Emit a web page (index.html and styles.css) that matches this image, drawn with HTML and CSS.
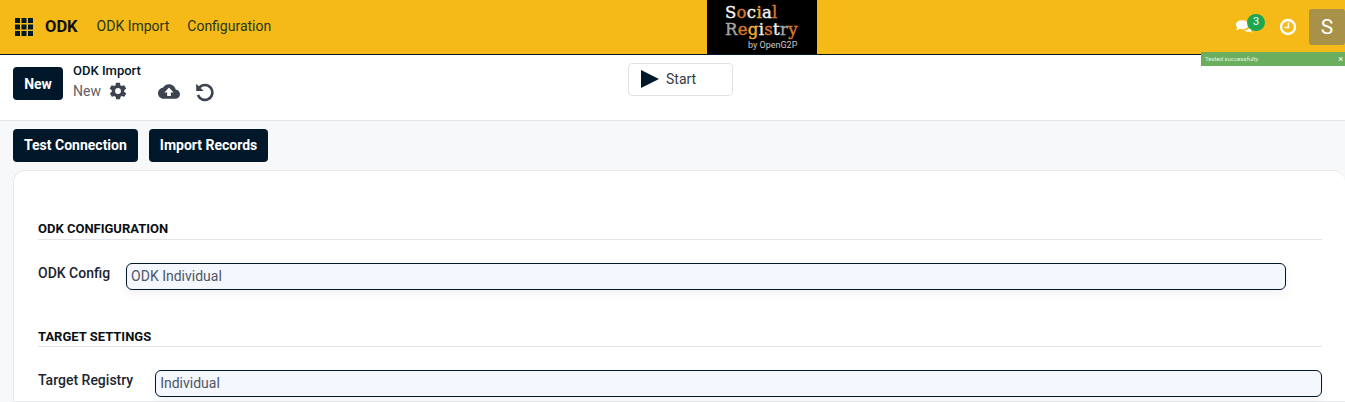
FILE: index.html
```html
<!DOCTYPE html>
<html lang="en">
<head>
<meta charset="utf-8">
<title>ODK Import</title>
<link rel="stylesheet" href="styles.css">
</head>
<body>
<header class="navbar">
  <div class="nav-left">
    <svg class="apps" viewBox="0 0 18 18" width="18" height="18"><path d="M0 0h5v5H0zM6.500 0h5v5h-5zM13 0h5v5h-5zM0 6.500h5v5H0zM6.500 6.500h5v5h-5zM13 6.500h5v5h-5zM0 13h5v5H0zM6.500 13h5v5h-5zM13 13h5v5h-5z"/></svg>
    <span class="brand">ODK</span>
    <a class="nav-link">ODK Import</a>
    <a class="nav-link">Configuration</a>
  </div>
  <div class="logo">
    <div class="logo-line"><span class="lw">S</span><span class="lo">o</span><span class="lw">c</span><span class="ly">i</span><span class="lw">a</span><span class="lo">l</span></div>
    <div class="logo-line"><span class="lg">R</span><span class="lo">e</span><span class="ly">g</span><span class="lw">i</span><span class="lo">s</span><span class="lw">t</span><span class="lg">r</span><span class="lo">y</span></div>
    <div class="logo-by">by OpenG2P</div>
  </div>
  <div class="nav-right">
    <span class="chat">
      <svg viewBox="0 0 20 16" width="18" height="15"><path d="M8 1c4 0 7 2 7 5s-3 5-7 5c-1 0-2 0-3-.4C4 11.500 2.500 12 1 12c1-.8 1.600-1.800 1.700-2.800C1.600 8.300 1 7.200 1 6c0-3 3-5 7-5z" fill="#fff"/><path d="M16.500 6.500c1.600.8 2.500 2 2.500 3.300 0 1-.5 1.900-1.400 2.600.1.800.6 1.500 1.400 2.100-1.300 0-2.500-.4-3.300-1-2 .6-4.500.3-6-1 3.500 0 6.800-2 6.800-6z" fill="#fff"/></svg>
      <span class="badge">3</span>
    </span>
    <svg class="clock" viewBox="0 0 18 18" width="18" height="18"><circle cx="9" cy="9" r="7" fill="none" stroke="#fff" stroke-width="2.400"/><path d="M9.500 4.500v5H5.500" fill="none" stroke="#fff" stroke-width="1.600"/></svg>
    <span class="avatar">S</span>
  </div>
</header>
<div class="toast"><span>Tested successfully.</span><span class="toast-x">×</span></div>
<section class="control">
  <div class="control-left">
    <button class="btn btn-new">New</button>
    <div class="crumbs">
      <div class="crumb-title">ODK Import</div>
      <div class="crumb-sub">
        <span>New</span>
        <svg viewBox="0 0 24 24" width="20" height="20" fill="#3d4450"><path d="M19.400 13c.1-.3.100-.7.100-1s0-.7-.1-1l2.100-1.600c.2-.2.200-.4.100-.6l-2-3.500c-.1-.2-.4-.3-.6-.2l-2.500 1c-.5-.4-1.100-.7-1.700-1l-.4-2.600c0-.3-.2-.5-.5-.5h-4c-.2 0-.5.200-.5.500l-.4 2.600c-.6.300-1.200.6-1.700 1l-2.500-1c-.2-.1-.5 0-.6.200l-2 3.500c-.1.200-.1.400.1.600L4.600 11c-.1.300-.1.700-.1 1s0 .7.100 1l-2.100 1.600c-.2.200-.2.400-.1.600l2 3.500c.1.200.4.300.6.200l2.500-1c.5.400 1.100.7 1.700 1l.4 2.600c0 .3.300.5.500.5h4c.3 0 .5-.2.500-.5l.4-2.600c.6-.3 1.200-.6 1.700-1l2.500 1c.2.100.5 0 .6-.2l2-3.500c.1-.2.100-.4-.1-.6zM12 15.500a3.500 3.500 0 1 1 0-7 3.500 3.500 0 0 1 0 7z"/></svg>
        <svg class="cloud" viewBox="0 0 24 18" width="22" height="17"><path fill="#3d4450" d="M19.300 6.900C18.600 3.500 15.600 1 12 1 9.100 1 6.600 2.600 5.300 5 2.300 5.400 0 7.900 0 11c0 3.300 2.700 6 6 6h13c2.800 0 5-2.200 5-5 0-2.600-2.100-4.800-4.700-5.100z"/><path fill="#fff" d="M12 4.500 17 10h-3v4h-4v-4H7z"/></svg>
        <svg class="undo" viewBox="0 0 24 24" width="21" height="21"><path fill="none" stroke="#3d4450" stroke-width="3" d="M6 7.500A8.500 8.500 0 1 1 4.500 16"/><path fill="#3d4450" d="M2.500 3v8.500H11z"/></svg>
      </div>
    </div>
  </div>
  <button class="btn-start"><svg viewBox="0 0 18 18" width="18" height="18"><path d="M0 0 18 9 0 18z" fill="#01182b"/></svg><span>Start</span></button>
</section>
<main class="content">
  <div class="actions">
    <button class="btn">Test Connection</button>
    <button class="btn">Import Records</button>
  </div>
  <div class="card">
    <h2 class="sec-title first">ODK CONFIGURATION</h2>
    <div class="row narrow">
      <label class="lbl">ODK Config</label>
      <div class="field">ODK Individual</div>
    </div>
    <h2 class="sec-title second">TARGET SETTINGS</h2>
    <div class="row">
      <label class="lbl">Target Registry</label>
      <div class="field">Individual</div>
    </div>
  </div>
</main>
</body>
</html>
```
FILE: styles.css
```css
* { box-sizing: border-box; }
html, body { margin: 0; height: 402px; overflow: hidden; }
body { font-family: Roboto, "Liberation Sans", sans-serif; font-size: 14px; color: #01182b; background: #f7f8fa; position: relative; }

.navbar { height: 55px; background: #f5ba18; border-bottom: 1px solid #01182b; display: grid; grid-template-columns: 707px 110px 1fr; align-items: center; }
.nav-left { display: flex; align-items: center; padding: 0 0 2px 15px; }
.apps { fill: #01182b; margin-right: 12px; margin-top: 1px; }
.brand { font-size: 16.500px; font-weight: 700; margin-right: 19px; color: #111; }
.nav-link { font-size: 14px; margin-right: 18px; color: #26361f; }

.logo { height: 54px; background: #000; padding: 4px 0 0 18px; display: flex; flex-direction: column; }
.logo-line { font-family: "DejaVu Serif", "Liberation Serif", serif; font-size: 16.500px; line-height: 17px; letter-spacing: .3px; -webkit-text-stroke: .4px currentColor; }
.lw { color: #f2f2f2; }
.lo { color: #d9782c; }
.ly { color: #f0b030; }
.lg { color: #a5a5a5; }
.logo-by { font-size: 9px; line-height: 11px; color: #c9c9c9; margin: 2px 0 0 23px; }

.nav-right { display: flex; align-items: center; justify-content: flex-end; }
.chat { position: relative; display: block; width: 18px; height: 15px; margin: -1px 26px 0 0; }
.chat svg { display: block; }
.badge { position: absolute; left: 12px; top: -5px; width: 18px; height: 17px; border-radius: 9px; background: #1ea650; color: #fff; font-size: 11px; line-height: 15px; text-align: center; }
.clock { margin: -1px 12px 0 0; }
.avatar { width: 36px; height: 36px; border-radius: 3px; background: #a8924a; color: #fff; font-size: 21px; display: flex; align-items: center; justify-content: center; margin-top: -1px; }

.toast { position: absolute; left: 1201px; top: 52px; width: 144px; height: 14px; background: #6aae5e; color: #e6f3e2; font-size: 6px; line-height: 14px; padding: 0 2px 0 4px; display: flex; justify-content: space-between; }
.toast-x { font-size: 9px; color: #fff; }

.control { height: 66px; background: #fff; border-bottom: 1px solid #e4e5e8; display: grid; grid-template-columns: 628px 105px; padding-left: 13px; }
.control-left { display: flex; }
.btn { height: 33px; padding: 0 11px 2px; border: 0; border-radius: 4px; background: #01182b; color: #fff; font: 700 14px Roboto, "Liberation Sans", sans-serif; }
.btn-new { width: 50px; padding: 0; margin-top: 12px; }
.crumbs { margin-left: 10px; padding-top: 8px; }
.crumb-title { font-size: 13px; line-height: 16px; font-weight: 500; }
.crumb-sub { display: flex; align-items: center; height: 20px; margin-top: 2px; color: #5f5f66; font-size: 14px; }
.crumb-sub > span { margin-right: 7px; }
.cloud { margin-left: 30px; }
.undo { margin-left: 14px; }
.btn-start { justify-self: stretch; margin: 8px 0 0 -13px; width: 105px; height: 33px; background: #fff; border: 1px solid #e0e2e6; border-radius: 4px; display: flex; align-items: center; padding: 0 0 2px 12px; color: #343a46; font: 14px Roboto, "Liberation Sans", sans-serif; }
.btn-start span { margin-left: 7px; }

.content { padding: 8px 0 0 13px; }
.actions { display: flex; gap: 11px; }
.card { margin-top: 8px; height: 232px; background: #fff; border: 1px solid #e6e7ea; border-right: 0; border-radius: 12px 12px 0 0; padding: 0 23px 0 24px; }
.sec-title { margin: 0; font-size: 13px; line-height: 18px; font-weight: 700; color: #0b0f14; border-bottom: 1px solid #e4e5e8; height: 20px; }
.sec-title.first { margin-top: 49px; }
.sec-title.second { margin-top: 37px; line-height: 20px; }
.row { display: flex; margin-top: 23px; height: 27px; }
.narrow { padding-right: 36px; }
.lbl { font-weight: 500; line-height: 20px; color: #1d2530; margin-right: 16px; white-space: nowrap; }
.row:not(.narrow) .lbl { margin-right: 22px; }
.field { flex: 1; height: 27px; background: #f4f7fe; border: 1px solid #01182b; border-radius: 6px; padding-left: 4px; line-height: 25px; color: #4d5668; box-shadow: 0 4px 10px rgba(0,0,0,.05); }
```
